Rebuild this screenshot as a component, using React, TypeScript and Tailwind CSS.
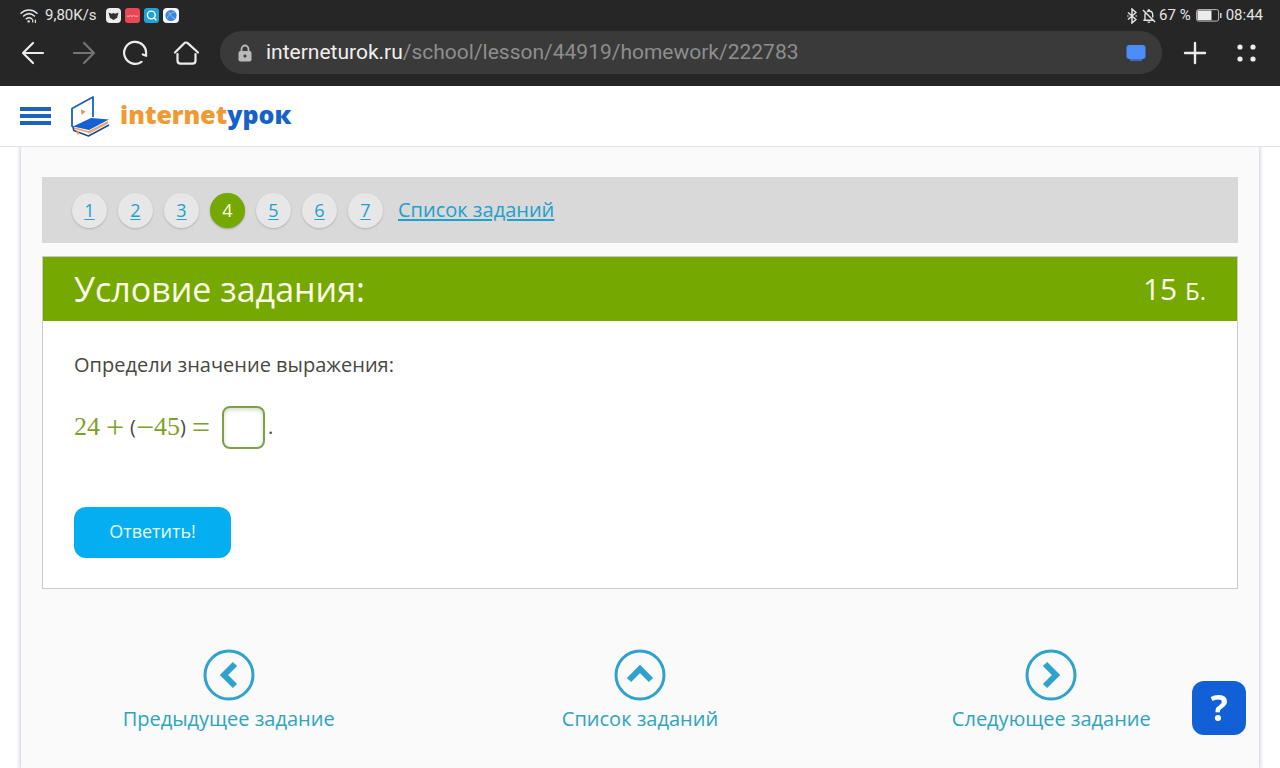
import { useState } from 'react';
import type { ReactNode } from 'react';

const tasks = [1, 2, 3, 4, 5, 6, 7];
const current = 4;

function StatusBar() {
  return (
    <div className="flex h-[31px] items-center justify-between pr-[17px] pl-5 text-[15px] text-[#e4e4e4]">
      <div className="flex items-center">
        <svg width="18" height="16" viewBox="0 0 18 16" fill="none" stroke="currentColor" strokeWidth="1.5" strokeLinecap="round">
          <path d="M1 5.2C5.5 1 12.5 1 17 5.2M3.6 8C7 5 11 5 14.4 8M6.3 10.8c1.7-1.4 3.7-1.4 5.4 0" />
          <circle cx="8.6" cy="13.4" r="1.2" fill="currentColor" stroke="none" />
          <path d="M12.7 11.5v2.5M15.4 12v2.5" strokeWidth="1.2" />
        </svg>
        <span className="ml-[7px]">9,80K/s</span>
        <div className="ml-[9px] flex gap-1">
          <svg width="15" height="15" viewBox="0 0 15 15">
            <rect width="15" height="15" rx="4" fill="#ececec" />
            <path d="M2.5 4.5l3.2 1.2 1.8-.6 1.8.6 3.2-1.2-1.4 5.2-3.6 2.4-3.6-2.4z" fill="#303030" />
          </svg>
          <svg width="15" height="15" viewBox="0 0 15 15">
            <rect width="15" height="15" rx="3" fill="#ea4653" />
            <path d="M2 8.2h3l.7-.8.8.8H8l.8-.9.8.9H13" fill="none" stroke="#f9b9bd" strokeWidth="1" />
          </svg>
          <svg width="15" height="15" viewBox="0 0 15 15">
            <rect width="15" height="15" rx="3" fill="#1fa3d6" />
            <circle cx="7.3" cy="7" r="3.9" fill="none" stroke="#fff" strokeWidth="1.4" />
            <path d="M10 9.8l1.9 1.9" stroke="#fff" strokeWidth="1.5" strokeLinecap="round" />
          </svg>
          <svg width="16" height="15" viewBox="0 0 16 15">
            <rect width="16" height="15" rx="4" fill="#f6f9fd" />
            <circle cx="8" cy="7.5" r="5.6" fill="#3d84dd" />
            <path d="M4 10.5C6 6 8 4.6 11.5 4.4M5.5 4.2c2 3 3.4 5.6 6.5 6.4" fill="none" stroke="#9cc6f5" strokeWidth="0.9" />
          </svg>
        </div>
      </div>
      <div className="flex items-center">
        <svg width="10" height="16" viewBox="0 0 10 16" fill="none" stroke="currentColor" strokeWidth="1.5">
          <path d="M1 4.5l8 7-4 3.5V1l4 3.5-8 7" />
          <circle cx="0.9" cy="8" r="0.8" fill="currentColor" stroke="none" />
          <circle cx="9.1" cy="8" r="0.8" fill="currentColor" stroke="none" />
        </svg>
        <svg className="ml-[5px]" width="14" height="16" viewBox="0 0 15 16" fill="none" stroke="currentColor" strokeWidth="1.5">
          <path d="M1 1.5l13 13M1.5 12.5h10M3.2 12V7c0-1 .3-1.8.8-2.5M5.2 3.2C5.9 2.8 6.4 2.7 7.2 2.7c2.6 0 4.3 1.8 4.3 4.3v2.5M6.2 1.4h2.3M6 14.6h2.8" />
        </svg>
        <span className="ml-[3px]">67 %</span>
        <svg className="ml-[5px]" width="26" height="13" viewBox="0 0 26 13">
          <rect x="0.6" y="0.6" width="22" height="11.5" rx="2" fill="none" stroke="#bdbdbd" strokeWidth="1" />
          <rect x="1.5" y="1.5" width="14" height="9.7" fill="#ececec" />
          <path d="M24.8 4v5" stroke="#d5d5d5" strokeWidth="1.5" />
        </svg>
        <span className="ml-1">08:44</span>
      </div>
    </div>
  );
}

function IconButton({ label, dim, children }: { label: string; dim?: boolean; children: ReactNode }) {
  return (
    <button type="button" aria-label={label} className={dim ? 'text-[#747474]' : 'text-[#ececec]'}>
      <svg width="26" height="26" viewBox="0 0 26 26" fill="none" stroke="currentColor" strokeWidth="2.2" strokeLinecap="round" strokeLinejoin="round">
        {children}
      </svg>
    </button>
  );
}

function Toolbar() {
  return (
    <div className="flex h-[55px] items-start pr-5 pl-5">
      <div className="flex h-[43px] items-center gap-[25px]">
        <IconButton label="Назад">
          <path d="M23 13H3M13 3L3 13l10 10" />
        </IconButton>
        <IconButton label="Вперёд" dim>
          <path d="M3 13h20M13 3l10 10-10 10" />
        </IconButton>
        <IconButton label="Обновить">
          <path d="M19.5 21.8A11 11 0 1 1 24 14.5M24.2 15.8L20.8 14.4" />
        </IconButton>
        <IconButton label="Домой">
          <path d="M2 12.5L11 3.4c1.2-1.2 2.8-1.2 4 0L25 12.5M4.5 14v6.5c0 2 1 3.2 3 3.2h12c2 0 3-1.2 3-3.2V14" />
        </IconButton>
      </div>
      <div className="ml-[21px] flex h-[43px] flex-1 items-center rounded-full bg-[#3a3a3a] px-4">
        <svg width="18" height="20" viewBox="0 0 18 20">
          <path d="M5.5 9V6a3.5 3.5 0 0 1 7 0v3" fill="none" stroke="#b9b9b9" strokeWidth="1.8" />
          <rect x="2.5" y="8" width="13" height="10.5" rx="2" fill="#b9b9b9" />
          <circle cx="9" cy="13" r="1.6" fill="#3a3a3a" />
        </svg>
        <p className="ml-3 flex-1 text-[21px] text-[#8e8e8e]">
          <span className="text-[#f0f0f0]">interneturok.ru</span>/school/lesson/44919/homework/222783
        </p>
        <svg width="20" height="18" viewBox="0 0 20 18">
          <rect x="0.5" y="1" width="19" height="14" rx="3" fill="#4c8dfb" />
          <path d="M4 16h12" stroke="#4c8dfb" strokeWidth="1.2" />
        </svg>
      </div>
      <div className="ml-5 flex h-[43px] items-center gap-[26px]">
        <IconButton label="Новая вкладка">
          <path d="M13 3v20M3 13h20" strokeWidth="2.4" />
        </IconButton>
        <IconButton label="Меню">
          <g fill="currentColor" stroke="none">
            <circle cx="6" cy="7" r="2.6" />
            <circle cx="19" cy="7" r="2.6" />
            <circle cx="6" cy="19" r="2.6" />
            <circle cx="19" cy="19" r="2.6" />
          </g>
        </IconButton>
      </div>
    </div>
  );
}

function Logo() {
  return (
    <a href="#" className="ml-5 flex items-center">
      <svg width="39" height="42" viewBox="0 0 39 42" strokeLinejoin="round">
        <path d="M2.5 32L1 31V13.5L22 2v20" fill="none" stroke="#1d5fc0" strokeWidth="1.8" />
        <path d="M10 14.5l4.5 2-4 3.5z" fill="#ee8f35" />
        <path d="M2 31.5L20 23l18 1.5L18 35z" fill="#1560d4" />
        <path d="M3 33l14.5 4L37 27" fill="none" stroke="#f2a04e" strokeWidth="1.6" />
        <path d="M2 32l.8 3.5 14.7 5.5L38 30" fill="none" stroke="#174f9e" strokeWidth="1.6" />
        <path d="M17.5 38.5L37 28" fill="none" stroke="#d9a06a" strokeWidth="1" />
        <path d="M5 35l3 1.2-.5 3.8L6 38.7z" fill="#ee9a45" />
      </svg>
      <span className="mb-1 ml-[10px] text-[25px] leading-8 font-extrabold text-[#f09a33]">
        internet<span className="text-[#1762c9]">урок</span>
      </span>
    </a>
  );
}

function NavLink({ label, arrow }: { label: string; arrow: string }) {
  return (
    <a href="#" className="flex flex-col items-center text-xl leading-7 text-[#2da4bd]">
      <svg width="52" height="52" viewBox="0 0 52 52" fill="none" stroke="#2fa3cd">
        <circle cx="26" cy="26" r="24" strokeWidth="3" />
        <path d={arrow} strokeWidth="6" />
      </svg>
      <span className="mt-1">{label}</span>
    </a>
  );
}

export default function App() {
  const [answer, setAnswer] = useState('');

  return (
    <div className="flex min-h-screen flex-col bg-white font-['Open_Sans','Noto_Sans',sans-serif]">
      <div className="bg-[#262626] font-[Roboto,sans-serif]">
        <StatusBar />
        <Toolbar />
      </div>

      <header className="flex h-[61px] items-center border-b border-[#dfe3e8] pl-5">
        <button type="button" aria-label="Меню сайта" className="flex w-[31px] flex-col gap-[3px]">
          <span className="h-1 bg-[#1f62bd]" />
          <span className="h-1 bg-[#1f62bd]" />
          <span className="h-1 bg-[#1f62bd]" />
        </button>
        <Logo />
      </header>

      <main className="mx-[21px] flex-1 bg-[#fafafa] pt-[30px] shadow-[0_0_4px_1px_#c9cad8] [clip-path:inset(0_-8px_0_-8px)]">
        <nav className="mx-[21px] flex h-[66px] items-center bg-[#d9d9d9] px-[30px]">
          <ul className="flex gap-[11px] text-lg">
            {tasks.map((n) => (
              <li key={n}>
                <a
                  href="#"
                  className={
                    n === current
                      ? 'flex size-[35px] items-center justify-center rounded-full bg-[#75a800] text-[#fdffe0] shadow-[0_1px_2px_#a0a0a0]'
                      : 'flex size-[35px] items-center justify-center rounded-full bg-[#e7e7e7] text-[#239fcb] underline underline-offset-2 shadow-[0_1px_2px_#b0b0b0]'
                  }
                >
                  {n}
                </a>
              </li>
            ))}
          </ul>
          <a href="#" className="ml-[15px] text-xl text-[#239fcb] underline underline-offset-2">
            Список заданий
          </a>
        </nav>

        <section className="mx-[21px] mt-[13px] border border-[#c9c9c9] bg-white">
          <div className="flex h-16 items-center justify-between bg-[#75a800] px-[31px] text-[#fdffe8]">
            <h1 className="text-[34px] leading-10">Условие задания:</h1>
            <p className="text-[30px] leading-10">
              15 <span className="text-2xl">Б.</span>
            </p>
          </div>
          <form className="px-[31px] py-[30px]" onSubmit={(e) => e.preventDefault()}>
            <p className="text-xl leading-7 text-[#484841]">Определи значение выражения:</p>
            <div className="mt-[26px] flex h-11 items-center text-xl text-[#484841]">
              <label
                htmlFor="answer"
                className="flex items-center gap-[6px] font-['Liberation_Serif'] text-[26px] leading-8 text-[#7da127]"
              >
                <span>24</span>
                <span className="text-[32px] leading-8">+</span>
                <span className="flex items-center">
                  <span className="font-['Open_Sans'] text-xl leading-8 text-[#484841]">(</span>
                  <span className="text-[32px] leading-8">−</span>
                  <span>45</span>
                  <span className="font-['Open_Sans'] text-xl leading-8 text-[#484841]">)</span>
                </span>
                <span className="text-[32px] leading-8">=</span>
              </label>
              <input
                id="answer"
                value={answer}
                onChange={(e) => setAnswer(e.target.value)}
                className="mr-[3px] ml-3 size-[43px] rounded-lg border-2 border-[#7f9f48] bg-white text-center shadow-[inset_0_2px_4px_#d4dccb] outline-none"
              />
              .
            </div>
            <button type="submit" className="mt-[58px] h-[51px] w-[157px] rounded-xl bg-[#04aef0] pb-1 text-lg text-[#e9fcff]">
              Ответить!
            </button>
          </form>
        </section>

        <div className="mx-[2px] mt-[60px] grid grid-cols-3 pb-8">
          <NavLink label="Предыдущее задание" arrow="M32 15L21 26l11 11" />
          <NavLink label="Список заданий" arrow="M15 31l11-11 11 11" />
          <NavLink label="Следующее задание" arrow="M20 15l11 11-11 11" />
        </div>
      </main>

      <button
        type="button"
        aria-label="Помощь"
        className="fixed right-[34px] bottom-[33px] size-[54px] rounded-xl bg-[#1160d8] font-['Noto_Sans'] text-4xl font-bold text-white"
      >
        ?
      </button>
    </div>
  );
}
